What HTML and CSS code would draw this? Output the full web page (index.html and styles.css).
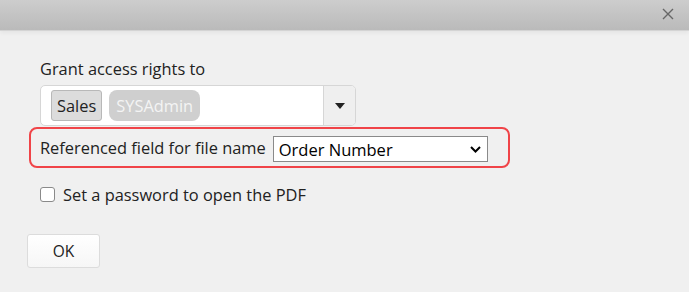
FILE: index.html
```html
<!DOCTYPE html>
<html lang="en">
<head>
    <meta charset="UTF-8">
    <title>Export PDF</title>
    <link rel="stylesheet" href="styles.css">
</head>
<body>

    <!-- dialog title bar -->
    <div class="titlebar">
        <svg class="close-icon" width="12" height="12" viewBox="0 0 12 12">
            <path d="M1 1 L11 11 M11 1 L1 11" stroke="#666" stroke-width="1.4" fill="none"/>
        </svg>
    </div>

    <div class="dialog-body">
        <div class="field-label">Grant access rights to</div>

        <div class="multi-select">
            <div class="tags">
                <span class="tag tag-active">Sales</span>
                <span class="tag tag-muted">SYSAdmin</span>
            </div>
            <div class="multi-toggle">
                <svg width="10" height="6" viewBox="0 0 10 6"><path d="M0 0 H10 L5 6 Z" fill="#222"/></svg>
            </div>
        </div>

        <div class="highlight-row">
            <span class="row-label">Referenced field for file name</span>
            <div class="select-box">
                <span>Order Number</span>
                <svg width="11" height="7" viewBox="0 0 11 7"><path d="M1 1 L5.5 5.5 L10 1" stroke="#000" stroke-width="2" fill="none"/></svg>
            </div>
        </div>

        <label class="check-row">
            <input type="checkbox" class="check">
            <span>Set a password to open the PDF</span>
        </label>

        <button class="ok-btn">OK</button>
    </div>

</body>
</html>
```

FILE: styles.css
```css
body {
    margin: 0;
    background-color: #f0f0f0;
    font-family: "Open Sans", "Noto Sans", sans-serif;
    color: #222;
    height: 292px;
    overflow: hidden;
}

/* верхняя полоса диалога */
.titlebar {
    height: 30px;
    background: linear-gradient(#cdcdcd, #bababa);
    border-bottom: 1px solid #d4d4d4;
    box-shadow: 0 2px 4px rgba(0, 0, 0, 0.05);
    display: flex;
    justify-content: flex-end;
    align-items: center;
}

.close-icon {
    margin-right: 15px;
    margin-top: -3px;
}

.dialog-body {
    padding: 27px 0 0 29px;
}

.field-label {
    font-size: 16.4px;
    line-height: 22px;
    margin-left: 11px;
}

.multi-select {
    display: flex;
    width: 314px;
    height: 39px;
    margin: 5px 0 0 11px;
    background-color: white;
    border: 1px solid #d6d6d6;
    border-radius: 5px;
    overflow: hidden;
}

.tags {
    flex: 1;
    display: flex;
    align-items: center;
    gap: 7px;
    padding-left: 10px;
}

.tag {
    font-size: 16.4px;
    height: 31px;
    line-height: 31px;
    box-sizing: border-box;
}

.tag-active {
    background-color: #dcdcdc;
    border: 1px solid #b8b8b8;
    border-radius: 3px;
    padding: 0 5px;
    line-height: 29px;
}

.tag-muted {
    background-color: #cfcfcf;
    color: #f4f4f4;
    border-radius: 8px;
    padding: 0 7px;
}

.multi-toggle {
    width: 31px;
    background-color: #efefef;
    border-left: 1px solid #d6d6d6;
    display: flex;
    justify-content: center;
    align-items: center;
}

/* красная рамка вокруг строки */
.highlight-row {
    display: flex;
    align-items: center;
    width: 468px;
    height: 37px;
    margin-top: 1px;
    border: 2px solid #f04448;
    border-radius: 8px;
    padding-left: 9px;
}

.row-label {
    font-size: 16.4px;
    margin-right: 7px;
}

.select-box {
    display: flex;
    align-items: center;
    justify-content: space-between;
    box-sizing: border-box;
    width: 215px;
    height: 26px;
    background-color: white;
    border: 1px solid #8a8a8a;
    padding: 0 6px 0 5px;
    margin-top: 3px;
    font-size: 16.5px;
    color: #000;
}

.check-row {
    display: flex;
    align-items: center;
    margin: 15px 0 0 11px;
    font-size: 16.4px;
}

.check {
    appearance: none;
    width: 15px;
    height: 15px;
    margin: 0 8px 0 0;
    border: 1px solid #8a8a8a;
    border-radius: 3px;
    background-color: white;
}

.ok-btn {
    display: block;
    margin: 28px 0 0 -2px;
    width: 73px;
    height: 34px;
    font-family: "Open Sans", sans-serif;
    font-size: 15.5px;
    color: #222;
    background: linear-gradient(#ffffff, #f6f6f6);
    border: 1px solid #dcdcdc;
    border-radius: 3px;
}
```
